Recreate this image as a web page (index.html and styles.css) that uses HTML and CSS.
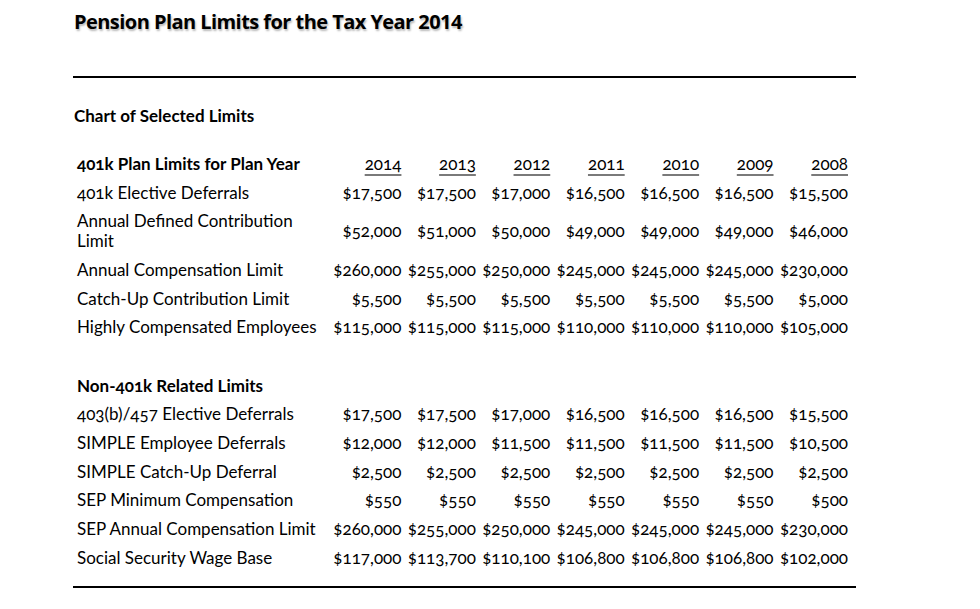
FILE: index.html
```html
<!DOCTYPE html>
<html lang="en">
<head>
<meta charset="utf-8">
<title>Pension Plan Limits for the Tax Year 2014</title>
<link rel="stylesheet" href="styles.css">
</head>
<body>
<div class="page">
  <h1 class="title">Pension Plan Limits for the Tax Year 2014</h1>
  <div class="rule"></div>
  <h2 class="subtitle">Chart of Selected Limits</h2>
  <table class="limits">
    <colgroup>
      <col class="c-label">
      <col class="c-num"><col class="c-num"><col class="c-num"><col class="c-num"><col class="c-num"><col class="c-num"><col class="c-num">
    </colgroup>
    <tbody>
      <tr class="head">
        <td class="label">401k Plan Limits for Plan Year</td>
        <td><span class="yr">2014</span></td><td><span class="yr">2013</span></td><td><span class="yr">2012</span></td><td><span class="yr">2011</span></td><td><span class="yr">2010</span></td><td><span class="yr">2009</span></td><td><span class="yr">2008</span></td>
      </tr>
      <tr><td class="label">401k Elective Deferrals</td><td>$17,500</td><td>$17,500</td><td>$17,000</td><td>$16,500</td><td>$16,500</td><td>$16,500</td><td>$15,500</td></tr>
      <tr><td class="label">Annual Defined Contribution<br>Limit</td><td>$52,000</td><td>$51,000</td><td>$50,000</td><td>$49,000</td><td>$49,000</td><td>$49,000</td><td>$46,000</td></tr>
      <tr><td class="label">Annual Compensation Limit</td><td>$260,000</td><td>$255,000</td><td>$250,000</td><td>$245,000</td><td>$245,000</td><td>$245,000</td><td>$230,000</td></tr>
      <tr><td class="label">Catch-Up Contribution Limit</td><td>$5,500</td><td>$5,500</td><td>$5,500</td><td>$5,500</td><td>$5,500</td><td>$5,500</td><td>$5,000</td></tr>
      <tr><td class="label">Highly Compensated Employees</td><td>$115,000</td><td>$115,000</td><td>$115,000</td><td>$110,000</td><td>$110,000</td><td>$110,000</td><td>$105,000</td></tr>
      <tr class="spacer"><td colspan="8"></td></tr>
      <tr class="head"><td class="label" colspan="8">Non-401k Related Limits</td></tr>
      <tr><td class="label">403(b)/457 Elective Deferrals</td><td>$17,500</td><td>$17,500</td><td>$17,000</td><td>$16,500</td><td>$16,500</td><td>$16,500</td><td>$15,500</td></tr>
      <tr><td class="label">SIMPLE Employee Deferrals</td><td>$12,000</td><td>$12,000</td><td>$11,500</td><td>$11,500</td><td>$11,500</td><td>$11,500</td><td>$10,500</td></tr>
      <tr><td class="label">SIMPLE Catch-Up Deferral</td><td>$2,500</td><td>$2,500</td><td>$2,500</td><td>$2,500</td><td>$2,500</td><td>$2,500</td><td>$2,500</td></tr>
      <tr><td class="label">SEP Minimum Compensation</td><td>$550</td><td>$550</td><td>$550</td><td>$550</td><td>$550</td><td>$550</td><td>$500</td></tr>
      <tr><td class="label">SEP Annual Compensation Limit</td><td>$260,000</td><td>$255,000</td><td>$250,000</td><td>$245,000</td><td>$245,000</td><td>$245,000</td><td>$230,000</td></tr>
      <tr><td class="label">Social Security Wage Base</td><td>$117,000</td><td>$113,700</td><td>$110,100</td><td>$106,800</td><td>$106,800</td><td>$106,800</td><td>$102,000</td></tr>
    </tbody>
  </table>
  <div class="rule rule-bottom"></div>
</div>
</body>
</html>
```

FILE: styles.css
```css
html, body {
  margin: 0;
  padding: 0;
  background: #ffffff;
}

body {
  font-family: "Lato", "Open Sans", "Liberation Sans", sans-serif;
  color: #000000;
}

.page {
  width: 783px;
  padding: 8px 0 0 73px;
}

.title {
  margin: 0;
  font-family: "Open Sans", "Liberation Sans", sans-serif;
  font-size: 20px;
  line-height: 28px;
  font-weight: 700;
  letter-spacing: -0.55px;
  text-shadow: 1px 2px 2px rgba(0, 0, 0, 0.28);
  padding-left: 1px;
}

.rule {
  margin-top: 40px;
  height: 0;
  border-top: 2px solid #000;
}

.subtitle {
  margin: 28px 0 0 1px;
  font-size: 17px;
  line-height: 20px;
  font-weight: 700;
}

.limits {
  margin-top: 23.5px;
  border-collapse: collapse;
  table-layout: fixed;
  width: 775px;
  font-size: 17px;
  font-variant-numeric: oldstyle-nums;
  font-feature-settings: "onum" 1;
}

.c-label { width: 254px; }
.c-num { width: 74.43px; }

.limits td {
  padding: 4.35px 0;
  line-height: 20px;
  text-align: right;
  white-space: nowrap;
  vertical-align: middle;
}

.limits td.label {
  text-align: left;
  padding-left: 4px;
}

.head td {
  font-weight: 700;
}

.head td:not(.label) {
  font-weight: 400;
}

.yr {
  text-decoration: underline;
  text-decoration-color: #7a7a7a;
  text-decoration-thickness: 2px;
  text-underline-offset: 4px;
}

.spacer td {
  height: 21px;
}

.rule-bottom {
  margin-top: 13.5px;
}
```
